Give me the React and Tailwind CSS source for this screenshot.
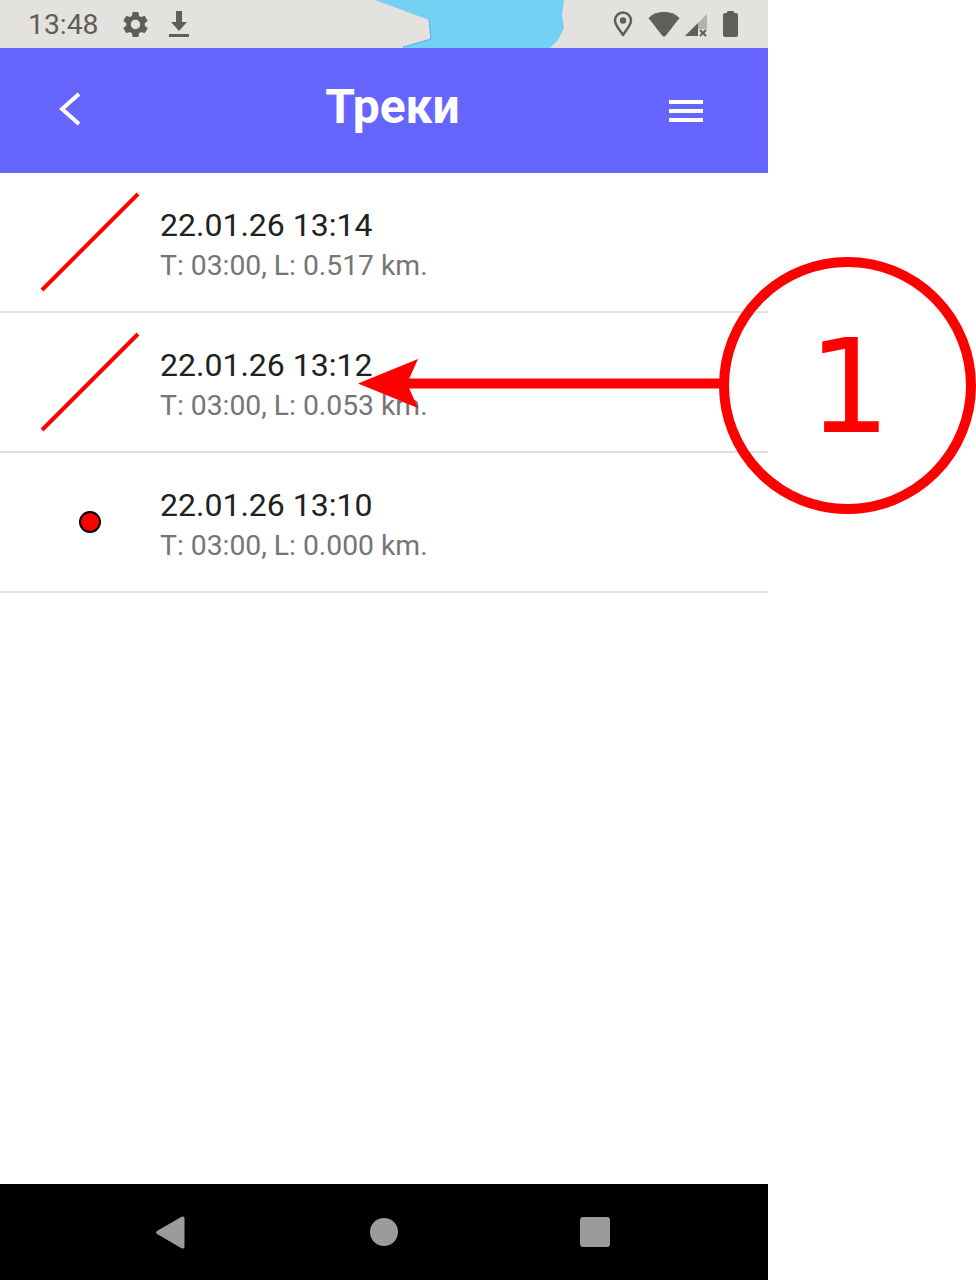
import React from 'react';

const tracks = [
    { date: '22.01.26 13:14', info: 'T: 03:00, L: 0.517 km.', point: false },
    { date: '22.01.26 13:12', info: 'T: 03:00, L: 0.053 km.', point: false },
    { date: '22.01.26 13:10', info: 'T: 03:00, L: 0.000 km.', point: true },
];

const GEAR = 'M19.14 12.94c.04-.3.06-.61.06-.94 0-.32-.02-.64-.07-.94l2.03-1.58c.18-.14.23-.41.12-.61l-1.92-3.32c-.12-.22-.37-.29-.59-.22l-2.39.96c-.5-.38-1.03-.7-1.62-.94l-.36-2.54c-.04-.24-.24-.41-.48-.41h-3.84c-.24 0-.43.17-.47.41l-.36 2.54c-.59.24-1.13.57-1.62.94l-2.39-.96c-.22-.08-.47 0-.59.22L2.74 8.87c-.12.21-.08.47.12.61l2.03 1.58c-.05.3-.09.63-.09.94s.02.64.07.94l-2.03 1.58c-.18.14-.23.41-.12.61l1.92 3.32c.12.22.37.29.59.22l2.39-.96c.5.38 1.03.7 1.62.94l.36 2.54c.05.24.24.41.48.41h3.84c.24 0 .44-.17.47-.41l.36-2.54c.59-.24 1.13-.56 1.62-.94l2.39.96c.22.08.47 0 .59-.22l1.92-3.32c.12-.22.07-.47-.12-.61l-2.01-1.58zM12 15.6c-1.98 0-3.6-1.62-3.6-3.6s1.62-3.6 3.6-3.6 3.6 1.62 3.6 3.6-1.62 3.6-3.6 3.6z';

function StatusBar() {
    return (
        <div className="relative flex h-12 shrink-0 items-center bg-[#e3e2df] text-[#5f5e5b]">
            <svg className="absolute left-0 top-0" width="768" height="48">
                <path d="M375 0 L429 20 L431 39 L403 47 L403 48 L550 48 L558 40 L564 28 L562 15 L564 0 Z" fill="#75d1f4" />
                <path d="M429 20 L431 39 L403 47" fill="none" stroke="#6aa8ee" strokeWidth="1" />
            </svg>
            <span className="relative ml-[28px] pt-[3px] text-[28.3px] leading-none">13:48</span>
            <svg className="relative ml-[22px]" width="31" height="31" viewBox="0 0 24 24" fill="currentColor">
                <path d={GEAR} />
            </svg>
            <svg className="relative ml-[18px]" width="20" height="26" viewBox="0 0 20 26" fill="currentColor">
                <path d="M7 0 H13 V11 H18 L10 20 L2 11 H7 Z" />
                <rect x="0" y="23" width="20" height="3" />
            </svg>
            <div className="flex-1" />
            <svg className="relative" width="20" height="26" viewBox="0 0 20 26" fill="none">
                <path d="M10 24 C6 18 2 14 2 9.5 A8 8 0 0 1 18 9.5 C18 14 14 18 10 24 Z" stroke="currentColor" strokeWidth="2.5" strokeLinejoin="round" />
                <circle cx="10" cy="9.5" r="3.2" fill="currentColor" />
            </svg>
            <svg className="relative ml-[15px]" width="32" height="26" viewBox="0 0 32 26" fill="currentColor">
                <path d="M0.5 7 C9 -1.5 23 -1.5 31.5 7 L17.5 25 Q16 26 14.5 25 Z" />
            </svg>
            <svg className="relative ml-[5px] mt-[2px]" width="23" height="23" viewBox="0 0 23 23">
                <path d="M0 22 L22 0 V22 Z" fill="#b3b1ac" />
                <path d="M0 22 L13 9 V22 Z" fill="currentColor" />
                <rect x="13" y="15" width="10" height="8" fill="#e3e2df" />
                <path d="M15 16 L21 22 M21 16 L15 22" stroke="currentColor" strokeWidth="2" />
            </svg>
            <svg className="relative ml-[15px] mr-[30px]" width="15" height="26" viewBox="0 0 15 26" fill="currentColor">
                <path d="M4 1 Q4 0 5 0 H10 Q11 0 11 1 V2 H13 Q15 2 15 4 V24 Q15 26 13 26 H2 Q0 26 0 24 V4 Q0 2 2 2 H4 Z" />
            </svg>
        </div>
    );
}

function Header() {
    return (
        <div className="flex h-[125px] shrink-0 items-center bg-[#6666ff] text-white">
            <svg className="mb-[4px] ml-[58px]" width="24" height="36" viewBox="0 0 24 36" fill="none">
                <path d="M21 3 L4 18 L21 33" stroke="white" strokeWidth="4" />
            </svg>
            <h1 className="flex-1 pb-[8px] pl-[34px] text-center text-[48px] font-bold leading-none">Треки</h1>
            <div className="mr-[65px] flex w-[34px] flex-col gap-[5px]">
                <div className="h-1 bg-white" />
                <div className="h-1 bg-white" />
                <div className="h-1 bg-white" />
            </div>
        </div>
    );
}

function TrackRow({ track }) {
    return (
        <div className="flex h-[140px] items-center border-b-2 border-[#e0e0e0]">
            <div className="flex w-[160px] shrink-0 justify-center">
                {track.point ? (
                    <div className="ml-[20px] h-[22px] w-[22px] rounded-full border-2 border-black bg-[#ff0000]" />
                ) : (
                    <svg className="ml-[19px]" width="100" height="100" viewBox="0 0 100 100">
                        <path d="M2 98 L98 2" stroke="#ff0000" strokeWidth="4" />
                    </svg>
                )}
            </div>
            <div className="flex flex-col pt-[7px]">
                <span className="text-[32px] leading-[40px] text-[#212121]">{track.date}</span>
                <span className="text-[28.3px] leading-[41px] text-[#757575]">{track.info}</span>
            </div>
        </div>
    );
}

function NavBar() {
    return (
        <div className="flex h-24 shrink-0 items-center justify-between bg-black pl-[156px] pr-[158px]">
            <svg width="29" height="33" viewBox="0 0 29 33" fill="#9b9b9b">
                <path d="M1 15 L25.5 0.8 Q28.5 -0.5 28.5 2.5 V30.5 Q28.5 33.5 25.5 32.2 L1 18 Q-0.8 16.5 1 15 Z" />
            </svg>
            <div className="ml-[3px] h-7 w-7 rounded-full bg-[#9b9b9b]" />
            <div className="h-[30px] w-[30px] rounded-[3px] bg-[#9b9b9b]" />
        </div>
    );
}

export default function App() {
    return (
        <div className="relative h-[1280px] w-[976px] overflow-hidden bg-white font-['Roboto',sans-serif]">
            <div className="flex h-full w-[768px] flex-col">
                <StatusBar />
                <Header />
                <div className="flex-1">
                    {tracks.map((track) => (
                        <TrackRow key={track.date} track={track} />
                    ))}
                </div>
                <NavBar />
            </div>

            {/* red annotation on top of the screenshot */}
            <svg className="absolute left-0 top-0" width="976" height="1280" fill="none">
                <circle cx="847.5" cy="385.5" r="123.5" stroke="#ff0000" strokeWidth="10" />
                <path d="M720 383.5 H400" stroke="#ff0000" strokeWidth="10" />
                <path d="M358 383.5 L418 359 L407 383.5 L418 408 Z" fill="#ff0000" />
            </svg>
            <span className="absolute left-[808px] top-[312px] font-['DejaVu_Sans',sans-serif] text-[130px] leading-[150px] text-[#ff0000]">1</span>
        </div>
    );
}
